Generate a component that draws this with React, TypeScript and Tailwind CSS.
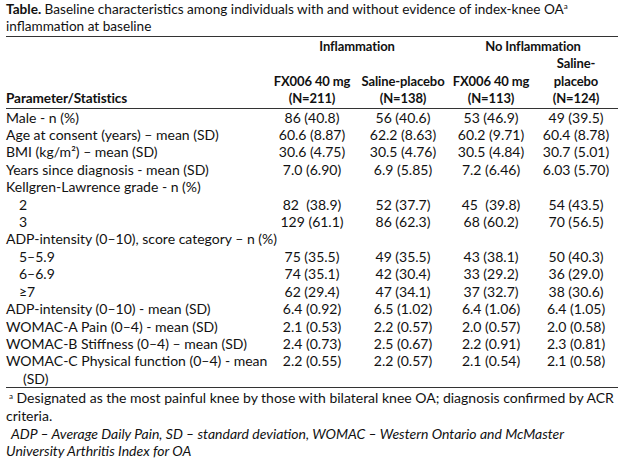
const rows: { label: string; indent?: boolean; cells: string[] }[] = [
  { label: "Male - n (%)", cells: ["86 (40.8)", "56 (40.6)", "53 (46.9)", "49 (39.5)"] },
  { label: "Age at consent (years) – mean (SD)", cells: ["60.6 (8.87)", "62.2 (8.63)", "60.2 (9.71)", "60.4 (8.78)"] },
  { label: "BMI (kg/m²) – mean (SD)", cells: ["30.6 (4.75)", "30.5 (4.76)", "30.5 (4.84)", "30.7 (5.01)"] },
  { label: "Years since diagnosis - mean (SD)", cells: ["7.0 (6.90)", "6.9 (5.85)", "7.2 (6.46)", "6.03 (5.70)"] },
  { label: "Kellgren-Lawrence grade - n (%)", cells: ["", "", "", ""] },
  { label: "2", indent: true, cells: ["82  (38.9)", "52 (37.7)", "45  (39.8)", "54 (43.5)"] },
  { label: "3", indent: true, cells: ["129 (61.1)", "86 (62.3)", "68 (60.2)", "70 (56.5)"] },
  { label: "ADP-intensity (0–10), score category – n (%)", cells: ["", "", "", ""] },
  { label: "5–5.9", indent: true, cells: ["75 (35.5)", "49 (35.5)", "43 (38.1)", "50 (40.3)"] },
  { label: "6–6.9", indent: true, cells: ["74 (35.1)", "42 (30.4)", "33 (29.2)", "36 (29.0)"] },
  { label: "≥7", indent: true, cells: ["62 (29.4)", "47 (34.1)", "37 (32.7)", "38 (30.6)"] },
  { label: "ADP-intensity (0–10) - mean (SD)", cells: ["6.4 (0.92)", "6.5 (1.02)", "6.4 (1.06)", "6.4 (1.05)"] },
  { label: "WOMAC-A Pain (0–4) - mean (SD)", cells: ["2.1 (0.53)", "2.2 (0.57)", "2.0 (0.57)", "2.0 (0.58)"] },
  { label: "WOMAC-B Stiffness (0–4) – mean (SD)", cells: ["2.4 (0.73)", "2.5 (0.67)", "2.2 (0.91)", "2.3 (0.81)"] },
];

const womacC = ["2.2 (0.55)", "2.2 (0.57)", "2.1 (0.54)", "2.1 (0.58)"];

export default function App() {
  return (
    <div
      className="w-[624px] h-[459px] bg-white text-[#111] text-[14px] leading-[17.4px] pl-[6px] pr-[6px] pt-[1px] overflow-hidden"
      style={{ fontFamily: "Lato, 'Liberation Sans', sans-serif" }}
    >
      <p className="leading-[17px] text-[13.6px]">
        <span className="font-bold">Table.</span> Baseline characteristics among individuals with and without evidence of
        index-knee OA<span className="relative top-[-5px] text-[8px] leading-none">a</span>
        <br />
        inflammation at baseline
      </p>

      <table className="w-[612px] mt-[1px] border-collapse table-fixed">
        <colgroup>
          <col className="w-[260px]" />
          <col className="w-[92px]" />
          <col className="w-[90px]" />
          <col className="w-[86px]" />
          <col className="w-[84px]" />
        </colgroup>
        <thead className="font-bold text-[13px] tracking-[-0.1px]">
          <tr className="border-t border-[#333]">
            <th />
            <th colSpan={2} className="text-center font-bold pt-[1px]">Inflammation</th>
            <th colSpan={2} className="text-center font-bold pt-[1px]">No Inflammation</th>
          </tr>
          <tr className="border-b border-[#333] align-bottom">
            <th className="text-left font-bold text-[13.6px]">Parameter/Statistics</th>
            <th className="text-center font-bold whitespace-nowrap">FX006 40 mg<br />(N=211)</th>
            <th className="text-center font-bold whitespace-nowrap">Saline-placebo<br />(N=138)</th>
            <th className="text-center font-bold whitespace-nowrap">FX006 40 mg<br />(N=113)</th>
            <th className="text-center font-bold whitespace-nowrap">Saline-<br />placebo<br />(N=124)</th>
          </tr>
        </thead>
        <tbody>
          {rows.map((r, i) => (
            <tr key={i}>
              <td className={r.indent ? "pl-[13px] whitespace-nowrap" : "whitespace-nowrap"}>{r.label}</td>
              {r.cells.map((c, j) => (
                <td key={j} className="text-center whitespace-pre">{c}</td>
              ))}
            </tr>
          ))}
          <tr className="border-b border-[#333] align-top">
            <td className="whitespace-nowrap">
              WOMAC-C Physical function (0–4) - mean
              <div className="pl-[17px]">(SD)</div>
            </td>
            {womacC.map((c, j) => (
              <td key={j} className="text-center whitespace-pre">{c}</td>
            ))}
          </tr>
        </tbody>
      </table>

      <div className="mt-[1px] leading-[18px]">
        <p className="pl-[3px] whitespace-nowrap">
          <span className="relative top-[-4px] text-[8px] leading-none">a</span> Designated as the most painful knee by those with bilateral knee OA; diagnosis confirmed by ACR
        </p>
        <p>criteria.</p>
        <p className="italic pl-[5px] whitespace-nowrap">
          ADP – Average Daily Pain, SD – standard deviation, WOMAC – Western Ontario and McMaster
        </p>
        <p className="italic leading-[16px]">University Arthritis Index for OA</p>
      </div>
    </div>
  );
}
